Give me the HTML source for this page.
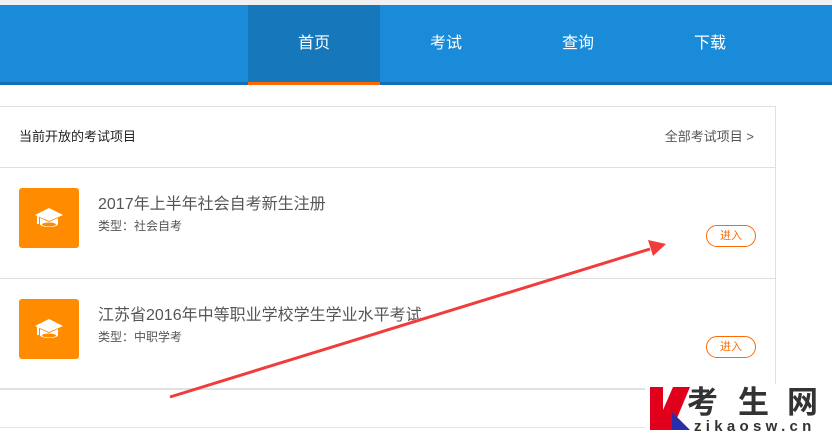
<!DOCTYPE html><html><head><meta charset="utf-8"><style>
*{margin:0;padding:0;box-sizing:border-box}
body{width:832px;height:444px;overflow:hidden;background:#fff;font-family:"Liberation Sans","Noto Sans CJK SC",sans-serif;position:relative}
.top{position:absolute;left:0;top:0;width:832px;height:5px;background:#f0f0f0}
.nav{position:absolute;left:0;top:5px;width:832px;background:#1a8bd9;border-bottom:3px solid #1170b8;height:80px}
.tab{position:absolute;top:0;width:132px;height:77px;line-height:78px;text-align:center;color:#fff;font-size:16px}
.act{background:#1677ba;border-bottom:3px solid #ff6a00;height:80px}
.card{position:absolute;left:-1px;top:106px;width:777px;height:284px;border:1px solid #e0e0e0}
.hd{height:61px;border-bottom:1px solid #e0e0e0;font-size:13px;color:#222;line-height:60px;padding-left:19px;position:relative}
.hd span{position:absolute;right:21px;top:0;color:#555}
.it{height:111px;border-bottom:1px solid #e0e0e0;position:relative}
.ic{position:absolute;left:19px;top:20px;width:60px;height:60px;background:#ff8c00;border-radius:3px}
.t{position:absolute;left:98px;top:22px;font-size:16px;color:#555}
.s{position:absolute;left:98px;top:49px;font-size:12px;color:#555}
.b{position:absolute;left:706px;top:57px;width:50px;height:22px;border:1px solid #ff6a00;border-radius:11px;color:#ff6a00;font-size:11px;text-align:center;line-height:20px}
</style></head><body>
<div class="top"></div>
<div class="nav">
<div class="tab act" style="left:248px">首页</div>
<div class="tab" style="left:380px">考试</div>
<div class="tab" style="left:512px">查询</div>
<div class="tab" style="left:644px">下载</div>
</div>
<div class="card">
<div class="hd">当前开放的考试项目<span>全部考试项目 &gt;</span></div>
<div class="it"><div class="ic"><svg width="60" height="60" viewBox="0 0 60 60"><path d="M16 27 L30 20 L44 27 L30 33Z" fill="#fff"/><path d="M21 30 v6 c0 4 18 4 18 0 v-6 l-9 4z" fill="#fff"/><ellipse cx="30" cy="36.5" rx="7" ry="2" fill="#ff8c00"/><rect x="18" y="28" width="2" height="8" fill="#fff"/></svg></div><div class="t">2017年上半年社会自考新生注册</div><div class="s">类型：社会自考</div><div class="b">进入</div></div>
<div class="it" style="height:110px"><div class="ic"><svg width="60" height="60" viewBox="0 0 60 60"><path d="M16 27 L30 20 L44 27 L30 33Z" fill="#fff"/><path d="M21 30 v6 c0 4 18 4 18 0 v-6 l-9 4z" fill="#fff"/><ellipse cx="30" cy="36.5" rx="7" ry="2" fill="#ff8c00"/><rect x="18" y="28" width="2" height="8" fill="#fff"/></svg></div><div class="t">江苏省2016年中等职业学校学生学业水平考试</div><div class="s">类型：中职学考</div><div class="b">进入</div></div>
</div>
<svg style="position:absolute;left:0;top:0" width="832" height="444"><line x1="170" y1="397" x2="650" y2="249" stroke="#f03c3c" stroke-width="3"/><path d="M666 244 L648 240 L653 256Z" fill="#f03c3c"/>
<line x1="0" y1="427.5" x2="832" y2="427.5" stroke="#e6e6e6"/>
<rect x="645" y="384" width="187" height="60" fill="#fff"/>
<path d="M650 387 L663 387 L663 430 L650 430Z" fill="#e0001b"/><path d="M673 387 L690 387 L672 430 L663 430 L663 410Z" fill="#e0001b"/><path d="M672 412 L690 430 L672 430Z" fill="#2a2fa8"/>
<text x="687" y="413" font-size="31" font-weight="bold" fill="#333" font-family="Noto Sans CJK SC,sans-serif">考</text>
<text x="738" y="413" font-size="31" font-weight="bold" fill="#333" font-family="Noto Sans CJK SC,sans-serif">生</text>
<text x="787" y="413" font-size="31" font-weight="bold" fill="#333" font-family="Noto Sans CJK SC,sans-serif">网</text>
<text x="694" y="431" font-size="15" font-weight="bold" fill="#333" letter-spacing="4.3" font-family="Liberation Sans">zikaosw.cn</text></svg>
</body></html>
